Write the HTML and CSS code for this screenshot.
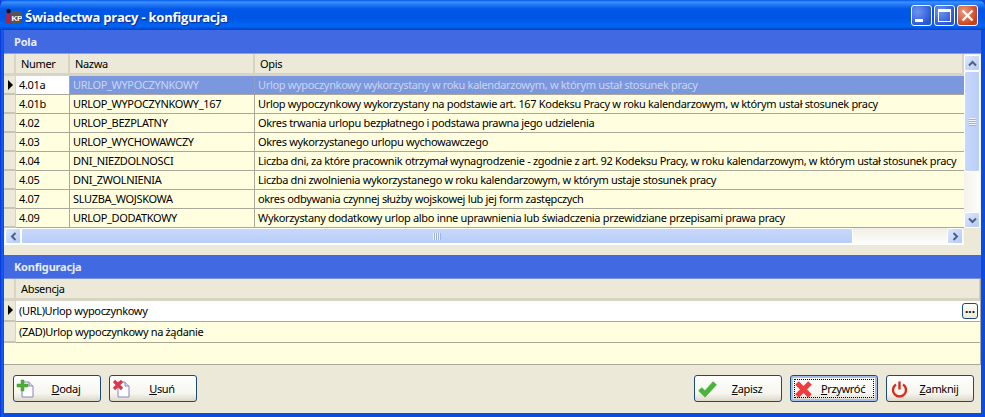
FILE: index.html
```html
<!DOCTYPE html>
<html lang="pl">
<head>
<meta charset="utf-8">
<title>Świadectwa pracy - konfiguracja</title>
<link rel="stylesheet" href="styles.css">
</head>
<body>
<div class="window">
  <div class="titlebar">
    <svg class="appicon" width="16" height="16" viewBox="0 0 16 16"><circle cx="2.6" cy="3" r="2.2" fill="#111"/><rect x="0.5" y="6" width="4" height="9" fill="#d81818"/><rect x="5" y="3" width="11" height="12" fill="#555"/><text x="5.5" y="12.5" font-family="Liberation Sans" font-size="8" font-weight="700" fill="#fff">KP</text></svg>
    <span class="title">Świadectwa pracy - konfiguracja</span>
    <div class="capbtns">
      <div class="capbtn"><span class="gl-min"></span></div>
      <div class="capbtn"><span class="gl-max"></span></div>
      <div class="capbtn close"><svg width="15" height="15" viewBox="0 0 15 15"><path d="M2.5 2.5 12.5 12.5M12.5 2.5 2.5 12.5" stroke="#fff" stroke-width="2.4"/></svg></div>
    </div>
  </div>
  <div class="client">
    <div class="panelhead">Pola</div>
    <div class="gridwrap">
      <div class="gridmain">
        <div class="row head"><div class="c ind"></div><div class="c num">Numer</div><div class="c nam">Nazwa</div><div class="c opi">Opis</div></div>
        <div class="row sel"><div class="c ind"><i class="arrow"></i></div><div class="c num cur">4.01a</div><div class="c nam">URLOP_WYPOCZYNKOWY</div><div class="c opi">Urlop wypoczynkowy wykorzystany w roku kalendarzowym, w którym ustał stosunek pracy</div></div>
        <div class="row"><div class="c ind"></div><div class="c num">4.01b</div><div class="c nam">URLOP_WYPOCZYNKOWY_167</div><div class="c opi">Urlop wypoczynkowy wykorzystany na podstawie art. 167 Kodeksu Pracy w roku kalendarzowym, w którym ustał stosunek pracy</div></div>
        <div class="row"><div class="c ind"></div><div class="c num">4.02</div><div class="c nam">URLOP_BEZPLATNY</div><div class="c opi">Okres trwania urlopu bezpłatnego i podstawa prawna jego udzielenia</div></div>
        <div class="row"><div class="c ind"></div><div class="c num">4.03</div><div class="c nam">URLOP_WYCHOWAWCZY</div><div class="c opi">Okres wykorzystanego urlopu wychowawczego</div></div>
        <div class="row"><div class="c ind"></div><div class="c num">4.04</div><div class="c nam">DNI_NIEZDOLNOSCI</div><div class="c opi">Liczba dni, za które pracownik otrzymał wynagrodzenie - zgodnie z art. 92 Kodeksu Pracy, w roku kalendarzowym, w którym ustał stosunek pracy</div></div>
        <div class="row"><div class="c ind"></div><div class="c num">4.05</div><div class="c nam">DNI_ZWOLNIENIA</div><div class="c opi">Liczba dni zwolnienia wykorzystanego w roku kalendarzowym, w którym ustaje stosunek pracy</div></div>
        <div class="row"><div class="c ind"></div><div class="c num">4.07</div><div class="c nam">SLUZBA_WOJSKOWA</div><div class="c opi">okres odbywania czynnej służby wojskowej lub jej form zastępczych</div></div>
        <div class="row"><div class="c ind"></div><div class="c num">4.09</div><div class="c nam">URLOP_DODATKOWY</div><div class="c opi">Wykorzystany dodatkowy urlop albo inne uprawnienia lub świadczenia przewidziane przepisami prawa pracy</div></div>
      </div>
      <div class="vscroll">
        <div class="sbtn"><svg width="9" height="7" viewBox="0 0 9 7"><path d="M1 5.5 4.5 2 8 5.5" fill="none" stroke="#4d6185" stroke-width="2"/></svg></div>
        <div class="vthumb"><span class="gripv"></span></div>
        <div class="vtrack"></div>
        <div class="sbtn"><svg width="9" height="7" viewBox="0 0 9 7"><path d="M1 1.5 4.5 5 8 1.5" fill="none" stroke="#4d6185" stroke-width="2"/></svg></div>
      </div>
      <div class="hscroll">
        <div class="sbtn"><svg width="7" height="9" viewBox="0 0 7 9"><path d="M5.5 1 2 4.5 5.5 8" fill="none" stroke="#4d6185" stroke-width="2"/></svg></div>
        <div class="hthumb"><span class="griph"></span></div>
        <div class="htrack"></div>
        <div class="sbtn"><svg width="7" height="9" viewBox="0 0 7 9"><path d="M1.5 1 5 4.5 1.5 8" fill="none" stroke="#4d6185" stroke-width="2"/></svg></div>
      </div>
      <div class="corner"></div>
    </div>
    <div class="spacer"></div>
    <div class="panelhead second">Konfiguracja</div>
    <div class="grid2">
      <div class="row head tall"><div class="c ind"></div><div class="c abs">Absencja</div></div>
      <div class="row tall cursel"><div class="c ind"><i class="arrow"></i></div><div class="c abs val">(URL)Urlop wypoczynkowy<div class="ellipsis">...</div></div></div>
      <div class="row tall"><div class="c ind"></div><div class="c abs val">(ZAD)Urlop wypoczynkowy na żądanie</div></div>
      <div class="fill"></div>
    </div>
    <div class="footer">
      <div class="btn"><svg width="22" height="22" viewBox="0 0 22 22"><path d="M6 4h7l4 4v11H6z" fill="#fff" stroke="#8a84b8"/><path d="M13 4v4h4" fill="#dfe0ee" stroke="#8a84b8"/><path d="M1 6h4V2h3v4h4v3H8v4H5V9H1z" fill="#4cae3a" stroke="#3c9a2c" stroke-width=".5"/></svg><span class="lbl"><u>D</u>odaj</span></div>
      <div class="btn"><svg width="22" height="22" viewBox="0 0 22 22"><path d="M6 4h7l4 4v11H6z" fill="#fff" stroke="#8a84b8"/><path d="M13 4v4h4" fill="#dfe0ee" stroke="#8a84b8"/><path d="M2 3l8 8M10 3l-8 8" stroke="#d8384a" stroke-width="3.2"/></svg><span class="lbl"><u>U</u>suń</span></div>
      <div class="grow"></div>
      <div class="btn"><svg width="22" height="22" viewBox="0 0 22 22"><path d="M3 11l5 5L18 5" fill="none" stroke="#4bb53a" stroke-width="5"/></svg><span class="lbl"><u>Z</u>apisz</span></div>
      <div class="btn focus"><svg width="22" height="22" viewBox="0 0 22 22"><path d="M4 5l13 13M17 5 4 18" stroke="#f03c3c" stroke-width="5"/></svg><span class="lbl"><u>P</u>rzywróć</span></div>
      <div class="btn"><svg width="22" height="22" viewBox="0 0 22 22"><path d="M7 6.5a6.5 6.5 0 1 0 7 0" fill="none" stroke="#dd2a1c" stroke-width="2.4"/><path d="M10.5 3.5v8" stroke="#dd2a1c" stroke-width="2.4"/></svg><span class="lbl"><u>Z</u>amknij</span></div>
    </div>
  </div>
</div>
</body>
</html>
```

FILE: styles.css
```css
* { box-sizing: border-box; }
html, body { margin: 0; padding: 0; }
body { width: 985px; height: 417px; overflow: hidden; font-family: "Noto Sans", sans-serif; font-size: 11px; letter-spacing: -0.33px; color: #000; background: #0831d9; }
.window { width: 985px; height: 417px; display: flex; flex-direction: column; background: linear-gradient(90deg, #0831d9, #1660f0 2px, #0a4be0 4px); }
.titlebar { height: 30px; flex: none; display: flex; align-items: center; padding: 0 7px 0 6px; border-radius: 7px 7px 0 0; background: linear-gradient(180deg, #0058ee 0, #3a93ff 2px, #2a7cf8 4px, #0058e6 9px, #0055e5 18px, #0067f5 26px, #0041c8 30px); }
.appicon { flex: none; margin-top: 1px; }
.title { margin: 3px 0 0 3px; color: #fff; font-weight: 700; font-size: 13px; font-family: "Open Sans", sans-serif; letter-spacing: -0.22px; text-shadow: 1px 1px 1px #0a2a90; white-space: nowrap; flex: 1; }
.capbtns { display: flex; gap: 2px; }
.capbtn { width: 21px; height: 21px; border: 1px solid #fff; border-radius: 3px; background: radial-gradient(circle at 30% 30%, #6f95ee, #2a55d8 75%); position: relative; display: flex; align-items: center; justify-content: center; }
.capbtn.close { background: radial-gradient(circle at 30% 30%, #ee9a7c, #c8401c 75%); }
.gl-min { width: 8px; height: 3px; background: #fff; align-self: flex-end; margin: 0 6px 3px 0; }
.gl-max { width: 13px; height: 13px; border: 1px solid #fff; border-top-width: 3px; }
.client { flex: 1; margin: 0 4px 4px; display: flex; flex-direction: column; background: #ece9d8; min-height: 0; }
.panelhead { height: 24px; flex: none; padding: 0 0 0 10px; line-height: 23px; background: #4169e1; color: #e8ecfa; font-weight: 700; font-size: 11px; letter-spacing: -0.2px; border-bottom: 1px solid #8f9fcf; }
.panelhead.second { border-bottom: 1px solid #7c93d8; }
.gridwrap { display: grid; grid-template-columns: 960px 17px; grid-template-rows: 174px 17px; flex: none; }
.gridmain { min-width: 0; overflow: hidden; background: #ffffe0; }
.row { display: flex; height: 19px; }
.row.head { height: 22px; background: #ece9d8; }
.c { height: 100%; line-height: 18px; padding-left: 3px; white-space: nowrap; overflow: hidden; border-bottom: 1px solid #aca899; border-right: 1px solid #aca899; background: #ffffe0; }
.head .c { background: #ece9d8; line-height: 20px; padding-left: 5px; border-right: 2px solid #d8d4c4; border-bottom: 3px solid #d8d4c4; }
.ind { width: 12px; flex: none; padding: 0; background: #ece9d8; border-right: 1px solid #d8d4c4; border-bottom: 2px solid #c8c4b4; position: relative; }
.arrow { position: absolute; left: 4px; top: 4px; width: 0; height: 0; border-left: 5px solid #000; border-top: 5px solid transparent; border-bottom: 5px solid transparent; }
.num { width: 54px; flex: none; }
.nam { width: 185px; flex: none; }
.opi { flex: 1; min-width: 0; border-right: none; }
.sel .nam, .sel .opi { background: #7b98de; color: #c9d4f2; border-bottom-color: #aca899; border-right-color: #8d9cc8; }
.cur { background: #fff; }
.vscroll { display: flex; flex-direction: column; padding: 1px 1px 0 0; background: #f3f2ea; grid-row: 1; grid-column: 2; }
.sbtn { width: 16px; height: 16px; flex: none; display: flex; align-items: center; justify-content: center; border: 1px solid #fff; border-radius: 2px; background: linear-gradient(135deg, #dde8fd, #b4c9f6); }
.vthumb { height: 101px; flex: none; border: 1px solid #fff; border-radius: 2px; background: linear-gradient(90deg, #c8d8fb, #b9cdf8); display: flex; align-items: center; justify-content: center; }
.gripv { width: 7px; height: 8px; background: repeating-linear-gradient(180deg, #eef3fe 0 1px, #9bb3ea 1px 2px); }
.vtrack { flex: 1; background: linear-gradient(90deg, #f3f2ea, #fefefb); }
.hscroll { display: flex; align-items: center; height: 17px; grid-row: 2; grid-column: 1; padding: 0 1px; background: linear-gradient(180deg, #f0efe6, #fefefb); border-bottom: 1px solid #fff; }
.hscroll .sbtn { height: 16px; }
.hthumb { width: 832px; height: 16px; flex: none; border: 1px solid #fff; border-radius: 2px; background: linear-gradient(180deg, #c8d8fb, #b9cdf8); display: flex; align-items: center; justify-content: center; }
.griph { width: 8px; height: 7px; background: repeating-linear-gradient(90deg, #eef3fe 0 1px, #9bb3ea 1px 2px); }
.htrack { flex: 1; }
.corner { background: #ece9d8; }
.spacer { height: 10px; flex: none; }
.grid2 { height: 86px; flex: none; display: flex; flex-direction: column; background: #ffffe0; border-bottom: 1px solid #aca899; border-right: 1px solid #aca899; }
.row.tall { height: 21px; flex: none; }
.row.tall.head { height: 22px; }
.abs { flex: 1; min-width: 0; position: relative; line-height: 20px; }
.val { border-right: none; }
.cursel .val { background: #fff; }
.head .abs { border-right: 1px solid #d0ccbc; }
.ellipsis { position: absolute; right: 2px; top: 2px; width: 16px; height: 16px; border: 1px solid #1c4a78; border-radius: 3px; background: linear-gradient(180deg, #fff, #ece9d8); font-weight: 700; line-height: 10px; text-align: center; font-size: 12px; letter-spacing: 0; color: #000; }
.fill { flex: 1; }
.footer { flex: 1; display: flex; gap: 8px; padding: 10px 7px 0 9px; background: #ece9d8; align-items: flex-start; }
.grow { flex: 1; }
.btn { width: 88px; height: 27px; border: 1px solid #1c4a78; border-radius: 3px; background: linear-gradient(180deg, #fff 0, #f6f5ef 70%, #dcd8c8 100%); display: flex; align-items: center; padding-left: 2px; position: relative; }
.btn svg { flex: none; }
.lbl { flex: 1; text-align: center; padding-right: 6px; }
.focus { box-shadow: inset 0 0 0 2px #a9c0ee; }
.focus::after { content: ""; position: absolute; inset: 3px; border: 1px dotted #000; }
```
